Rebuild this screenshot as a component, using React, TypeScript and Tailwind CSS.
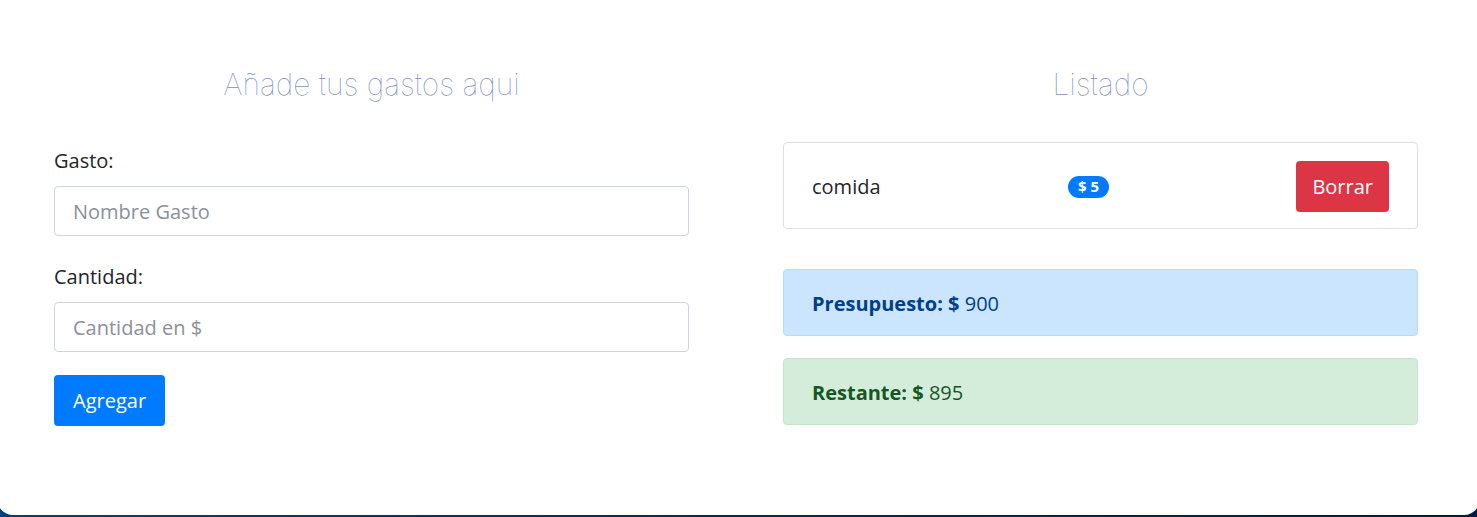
import React from "react";

export default function App() {
  return (
    <div className="h-[517px] w-full overflow-hidden bg-gradient-to-r from-[#004080] via-[#002a60] to-[#001a40]" style={{ fontFamily: '"Open Sans", "Noto Sans", sans-serif' }}>
      <div className="mt-[-12px] mx-[-3px] h-[527px] rounded-[16px] bg-white pt-[77px] pl-[57px] pr-[62px]">
        <div className="grid grid-cols-2 gap-x-[94px]">
          {/* Left column */}
          <div className="flex flex-col">
            <h2 className="h-[38px] text-center text-[30px] leading-[38px] font-thin text-[#7891c4]" style={{ fontFamily: 'Inter, "Open Sans", sans-serif' }}>
              Añade tus gastos aqui
            </h2>
            <label className="mt-[43px] text-[20px] leading-[30px] text-[#212529]">Gasto:</label>
            <input
              className="mt-[10px] h-[50px] w-full rounded-[4px] border border-[#ced4da] px-[18px] text-[20px] text-[#495057] placeholder:text-[#8a9199] outline-none"
              placeholder="Nombre Gasto"
            />
            <label className="mt-[26px] text-[20px] leading-[30px] text-[#212529]">Cantidad:</label>
            <input
              className="mt-[10px] h-[50px] w-full rounded-[4px] border border-[#ced4da] px-[18px] text-[20px] text-[#495057] placeholder:text-[#8a9199] outline-none"
              placeholder="Cantidad en $"
            />
            <div className="mt-[23px]">
              <button className="h-[51px] rounded-[4px] bg-[#007bff] px-[19px] text-[20px] text-white">Agregar</button>
            </div>
          </div>

          {/* Right column */}
          <div className="flex flex-col">
            <h2 className="h-[38px] text-center text-[30px] leading-[38px] font-thin text-[#7891c4]" style={{ fontFamily: 'Inter, "Open Sans", sans-serif' }}>
              Listado
            </h2>
            <div className="mt-[39px] flex h-[87px] items-center justify-between rounded-[4px] border border-[#dfdfdf] px-[28px] pt-[2px]">
              <span className="text-[20px] text-[#212529]">comida</span>
              <span className="flex h-[22px] items-center rounded-full bg-[#007bff] px-[10px] text-[15px] font-bold text-white">$ 5</span>
              <button className="h-[51px] rounded-[4px] bg-[#dc3545] px-[16px] text-[20px] text-white">Borrar</button>
            </div>
            <div className="mt-[40px] flex h-[67px] items-center rounded-[4px] border border-[#b8daff] bg-[#cce5ff] px-[28px] pt-[2px] text-[20px] text-[#004085]">
              <span><strong className="font-bold">Presupuesto: $</strong> 900</span>
            </div>
            <div className="mt-[22px] flex h-[67px] items-center rounded-[4px] border border-[#c3e6cb] bg-[#d4edda] px-[28px] pt-[2px] text-[20px] text-[#155724]">
              <span><strong className="font-bold">Restante: $</strong> 895</span>
            </div>
          </div>
        </div>
      </div>
    </div>
  );
}
